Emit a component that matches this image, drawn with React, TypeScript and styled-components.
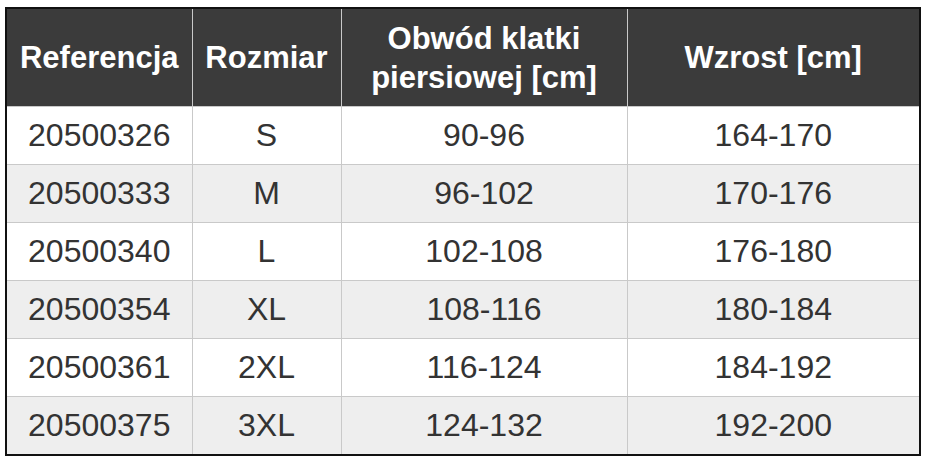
import React from 'react';
import styled, { createGlobalStyle } from 'styled-components';

const GlobalStyle = createGlobalStyle`
  html, body {
    margin: 0;
    padding: 0;
    background: #ffffff;
  }
  body {
    font-family: "Liberation Sans", Arial, sans-serif;
  }
`;

const Page = styled.div`
  padding: 7px 0 0 5px;
`;

const Table = styled.table`
  width: 916px;
  table-layout: fixed;
  border-collapse: collapse;
  border: 2px solid #111111;
`;

const HeadCell = styled.th`
  height: 97px;
  padding: 0 4px;
  background: #3b3b3b;
  color: #ffffff;
  font-size: 31px;
  font-weight: bold;
  line-height: 39px;
  text-align: center;
  border-left: 1px solid #c9c9c9;
  border-bottom: 1px solid #c9c9c9;
  &:first-child {
    border-left: none;
  }
`;

const Row = styled.tr<{ $shaded: boolean }>`
  background: ${p => (p.$shaded ? '#eeeeee' : '#ffffff')};
`;

const Cell = styled.td`
  height: 57px;
  padding: 0;
  color: #333333;
  font-size: 32px;
  text-align: center;
  border-left: 1px solid #c9c9c9;
  border-top: 1px solid #c9c9c9;
  &:first-child {
    border-left: none;
  }
`;

const rows = [
  ['20500326', 'S', '90-96', '164-170'],
  ['20500333', 'M', '96-102', '170-176'],
  ['20500340', 'L', '102-108', '176-180'],
  ['20500354', 'XL', '108-116', '180-184'],
  ['20500361', '2XL', '116-124', '184-192'],
  ['20500375', '3XL', '124-132', '192-200'],
];

export default function App() {
  return (
    <Page>
      <GlobalStyle />
      <Table>
        <colgroup>
          <col style={{ width: 186 }} />
          <col style={{ width: 149 }} />
          <col style={{ width: 286 }} />
          <col />
        </colgroup>
        <thead>
          <tr>
            <HeadCell>Referencja</HeadCell>
            <HeadCell>Rozmiar</HeadCell>
            <HeadCell>
              Obwód klatki
              <br />
              piersiowej [cm]
            </HeadCell>
            <HeadCell>Wzrost [cm]</HeadCell>
          </tr>
        </thead>
        <tbody>
          {rows.map((r, i) => (
            <Row key={r[0]} $shaded={i % 2 === 1}>
              {r.map((v, j) => (
                <Cell key={j}>{v}</Cell>
              ))}
            </Row>
          ))}
        </tbody>
      </Table>
    </Page>
  );
}
